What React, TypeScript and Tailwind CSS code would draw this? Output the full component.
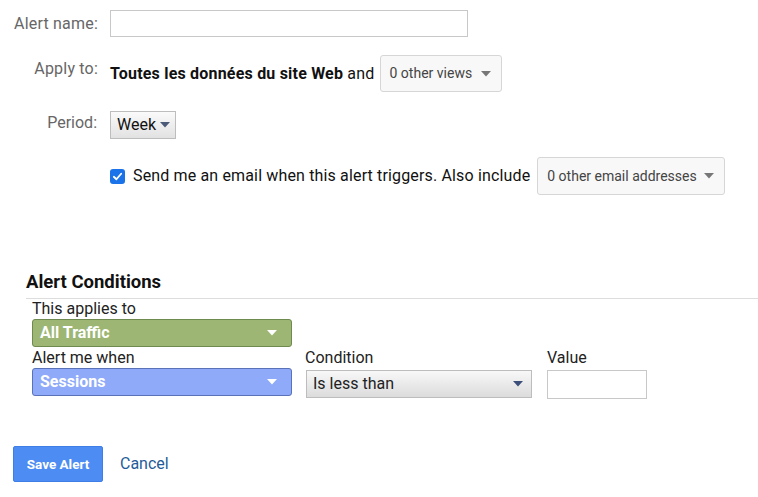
import React from "react";

const Caret = ({ color = "#555" }: { color?: string }) => (
  <svg width="10" height="6" viewBox="0 0 10 6" className="shrink-0">
    <path d="M0 0 L10 0 L5 5.5 Z" fill={color} />
  </svg>
);

export default function App() {
  return (
    <div className="w-[758px] h-[497px] bg-white text-[#222] overflow-hidden" style={{ fontFamily: "Roboto, 'Liberation Sans', sans-serif" }}>
      <div className="flex flex-col">
        {/* Alert name */}
        <div className="flex items-center mt-[10px] h-[27px]">
          <div className="w-[98px] text-right text-[16px] tracking-[0.2px] text-[#666]">Alert name:</div>
          <input className="ml-[12px] w-[358px] h-[27px] border border-[#c8c8c8] bg-white outline-none" />
        </div>
        {/* Apply to */}
        <div className="flex items-center mt-[18px] h-[37px]">
          <div className="w-[98px] text-right text-[16px] tracking-[0.2px] text-[#666] -mt-[10px]">Apply to:</div>
          <div className="ml-[12px] text-[16px] tracking-[0.2px] text-[#111]">
            <span className="font-bold">Toutes les données du site Web</span> and
          </div>
          <div className="ml-[5px] w-[122px] h-[37px] border border-[#d6d6d6] rounded-[3px] bg-[#f8f8f8] flex items-center justify-between pl-[9px] pr-[10px] text-[14px] text-[#444]">
            <span>0 other views</span>
            <Caret color="#777" />
          </div>
        </div>
        {/* Period */}
        <div className="flex items-center mt-[19px] h-[28px]">
          <div className="w-[97px] text-right text-[16px] text-[#666] -mt-[4px]">Period:</div>
          <div className="ml-[13px] w-[66px] h-[28px] border border-[#bdbdbd] bg-gradient-to-b from-[#fafafa] to-[#e2e2e2] flex items-center pl-[6px] gap-[4px] text-[16px] text-[#111]">
            <span>Week</span>
            <Caret color="#4a5a78" />
          </div>
        </div>
        {/* Email */}
        <div className="flex items-center mt-[18px] h-[38px] pl-[110px]">
          <div className="w-[15px] h-[15px] rounded-[3px] bg-[#1a73e8] flex items-center justify-center">
            <svg width="11" height="11" viewBox="0 0 12 12">
              <path d="M2 6.3 L4.8 9 L10 3" stroke="white" strokeWidth="2" fill="none" strokeLinecap="round" strokeLinejoin="round" />
            </svg>
          </div>
          <span className="ml-[8px] text-[16px] tracking-[0.15px] text-[#111]">Send me an email when this alert triggers. Also include</span>
          <div className="ml-[7px] w-[188px] h-[38px] border border-[#d6d6d6] rounded-[3px] bg-[#f8f8f8] flex items-center justify-between pl-[9px] pr-[10px] text-[14px] text-[#444]">
            <span>0 other email addresses</span>
            <Caret color="#777" />
          </div>
        </div>

        {/* Alert Conditions */}
        <div className="mt-[76px] ml-[26px] text-[18.5px] font-bold text-[#111] leading-[22px]">Alert Conditions</div>
        <div className="ml-[26px] mt-[5px] border-t border-[#ddd]" />
        <div className="ml-[32px] flex flex-col">
          <div className="text-[16px] text-[#222] leading-[20px]">This applies to</div>
          <div className="w-[260px] h-[28px] bg-[#9db674] border border-[#6f8a4e] rounded-[3px] flex items-center justify-between px-[7px] pr-[14px] text-white font-bold text-[16px]">
            <span>All Traffic</span>
            <Caret color="#fff" />
          </div>
          <div className="flex">
            <div className="flex flex-col w-[273px]">
              <div className="text-[16px] leading-[21px]">Alert me when</div>
              <div className="w-[260px] h-[28px] bg-[#8eaaf8] border border-[#5a72b8] rounded-[3px] flex items-center justify-between px-[7px] pr-[14px] text-white font-bold text-[16px]">
                <span>Sessions</span>
                <Caret color="#fff" />
              </div>
            </div>
            <div className="flex flex-col w-[242px]">
              <div className="text-[16px] leading-[21px]">Condition</div>
              <div className="mt-[2px] ml-[1px] w-[226px] h-[28px] border border-[#bdbdbd] bg-gradient-to-b from-[#f8f8f8] to-[#dcdcdc] flex items-center justify-between pl-[6px] pr-[8px] text-[16px] text-[#222]">
                <span>Is less than</span>
                <Caret color="#3b4f7a" />
              </div>
            </div>
            <div className="flex flex-col">
              <div className="text-[16px] leading-[21px]">Value</div>
              <input className="mt-[2px] w-[100px] h-[29px] border border-[#c8c8c8] outline-none" />
            </div>
          </div>
        </div>

        {/* Buttons */}
        <div className="flex items-center mt-[47px] ml-[13px]">
          <button className="w-[90px] h-[36px] bg-[#4d8cf3] border border-[#3f7ee6] rounded-[2px] text-white font-bold text-[13.5px]">Save Alert</button>
          <span className="ml-[17px] text-[16px] text-[#1f5c99]">Cancel</span>
        </div>
      </div>
    </div>
  );
}
